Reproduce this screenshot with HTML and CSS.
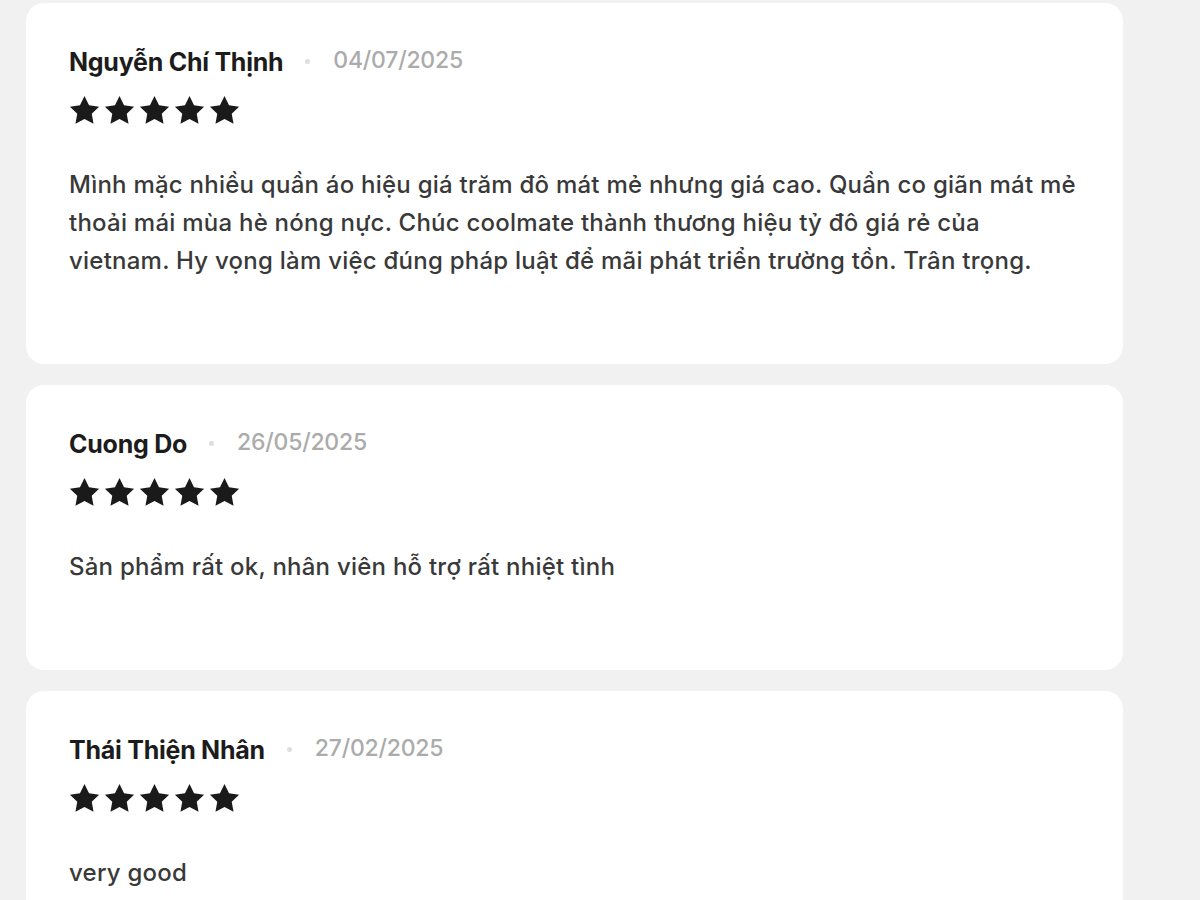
FILE: index.html
```html
<!DOCTYPE html>
<html lang="vi">
<head>
<meta charset="UTF-8">
<title>Đánh giá sản phẩm</title>
<link rel="stylesheet" href="styles.css">
</head>
<body>

<div class="reviews">
  <div class="review">
    <div class="review-head">
      <span class="review-name">Nguyễn Chí Thịnh</span>
      <span class="review-dot"></span>
      <span class="review-date">04/07/2025</span>
    </div>
    <div class="stars">
      <svg viewBox="0 0 24 24"><path d="M12 .8l3.5 7.1 7.8 1.1-5.7 5.5 1.4 7.8L12 18.6l-7 3.7 1.4-7.8L.7 9l7.8-1.1z"/></svg>
      <svg viewBox="0 0 24 24"><path d="M12 .8l3.5 7.1 7.8 1.1-5.7 5.5 1.4 7.8L12 18.6l-7 3.7 1.4-7.8L.7 9l7.8-1.1z"/></svg>
      <svg viewBox="0 0 24 24"><path d="M12 .8l3.5 7.1 7.8 1.1-5.7 5.5 1.4 7.8L12 18.6l-7 3.7 1.4-7.8L.7 9l7.8-1.1z"/></svg>
      <svg viewBox="0 0 24 24"><path d="M12 .8l3.5 7.1 7.8 1.1-5.7 5.5 1.4 7.8L12 18.6l-7 3.7 1.4-7.8L.7 9l7.8-1.1z"/></svg>
      <svg viewBox="0 0 24 24"><path d="M12 .8l3.5 7.1 7.8 1.1-5.7 5.5 1.4 7.8L12 18.6l-7 3.7 1.4-7.8L.7 9l7.8-1.1z"/></svg>
    </div>
    <p class="review-text">Mình mặc nhiều quần áo hiệu giá trăm đô mát mẻ nhưng giá cao. Quần co giãn mát mẻ thoải mái mùa hè nóng nực. Chúc coolmate thành thương hiệu tỷ đô giá rẻ của vietnam. Hy vọng làm việc đúng pháp luật để mãi phát triển trường tồn. Trân trọng.</p>
  </div>

  <div class="review">
    <div class="review-head">
      <span class="review-name">Cuong Do</span>
      <span class="review-dot"></span>
      <span class="review-date">26/05/2025</span>
    </div>
    <div class="stars">
      <svg viewBox="0 0 24 24"><path d="M12 .8l3.5 7.1 7.8 1.1-5.7 5.5 1.4 7.8L12 18.6l-7 3.7 1.4-7.8L.7 9l7.8-1.1z"/></svg>
      <svg viewBox="0 0 24 24"><path d="M12 .8l3.5 7.1 7.8 1.1-5.7 5.5 1.4 7.8L12 18.6l-7 3.7 1.4-7.8L.7 9l7.8-1.1z"/></svg>
      <svg viewBox="0 0 24 24"><path d="M12 .8l3.5 7.1 7.8 1.1-5.7 5.5 1.4 7.8L12 18.6l-7 3.7 1.4-7.8L.7 9l7.8-1.1z"/></svg>
      <svg viewBox="0 0 24 24"><path d="M12 .8l3.5 7.1 7.8 1.1-5.7 5.5 1.4 7.8L12 18.6l-7 3.7 1.4-7.8L.7 9l7.8-1.1z"/></svg>
      <svg viewBox="0 0 24 24"><path d="M12 .8l3.5 7.1 7.8 1.1-5.7 5.5 1.4 7.8L12 18.6l-7 3.7 1.4-7.8L.7 9l7.8-1.1z"/></svg>
    </div>
    <p class="review-text">Sản phẩm rất ok, nhân viên hỗ trợ rất nhiệt tình</p>
  </div>

  <div class="review">
    <div class="review-head">
      <span class="review-name">Thái Thiện Nhân</span>
      <span class="review-dot"></span>
      <span class="review-date">27/02/2025</span>
    </div>
    <div class="stars">
      <svg viewBox="0 0 24 24"><path d="M12 .8l3.5 7.1 7.8 1.1-5.7 5.5 1.4 7.8L12 18.6l-7 3.7 1.4-7.8L.7 9l7.8-1.1z"/></svg>
      <svg viewBox="0 0 24 24"><path d="M12 .8l3.5 7.1 7.8 1.1-5.7 5.5 1.4 7.8L12 18.6l-7 3.7 1.4-7.8L.7 9l7.8-1.1z"/></svg>
      <svg viewBox="0 0 24 24"><path d="M12 .8l3.5 7.1 7.8 1.1-5.7 5.5 1.4 7.8L12 18.6l-7 3.7 1.4-7.8L.7 9l7.8-1.1z"/></svg>
      <svg viewBox="0 0 24 24"><path d="M12 .8l3.5 7.1 7.8 1.1-5.7 5.5 1.4 7.8L12 18.6l-7 3.7 1.4-7.8L.7 9l7.8-1.1z"/></svg>
      <svg viewBox="0 0 24 24"><path d="M12 .8l3.5 7.1 7.8 1.1-5.7 5.5 1.4 7.8L12 18.6l-7 3.7 1.4-7.8L.7 9l7.8-1.1z"/></svg>
    </div>
    <p class="review-text">very good</p>
  </div>
</div>

</body>
</html>
```

FILE: styles.css
```css
/* Page */
body {
  margin: 0;
  background-color: #f1f1f1;
  font-family: Inter, "Noto Sans", sans-serif;
  color: #222222;
}

/* The list of review cards */
.reviews {
  display: flex;
  flex-direction: column;
  gap: 21px;
  width: 1097px;
  margin-left: 26px;
  padding-top: 3px;
}

.review {
  background-color: #ffffff;
  border-radius: 18px;
  padding: 44px 42px 84px 43px;
}

.review-head {
  display: flex;
  align-items: center;
  height: 30px;
}

.review-name {
  font-size: 25px;
  font-weight: 700;
  letter-spacing: -0.01em;
  color: #1c1c1c;
}

.review-dot {
  width: 5px;
  height: 5px;
  border-radius: 50%;
  background-color: #dedede;
  margin: -2px 23px 0 22px;
}

.review-date {
  font-size: 23px;
  font-weight: 500;
  letter-spacing: -0.01em;
  color: #ababab;
  margin-top: -5px;
}

/* Rating */
.stars {
  display: flex;
  gap: 4px;
  margin-top: 18px;
}

.stars svg {
  width: 31px;
  height: 31px;
  fill: #1a1a1a;
}

.review-text {
  margin: 40px 0 0;
  font-size: 24px;
  font-weight: 500;
  line-height: 38px;
  letter-spacing: 0.01em;
  color: #393939;
}
```
